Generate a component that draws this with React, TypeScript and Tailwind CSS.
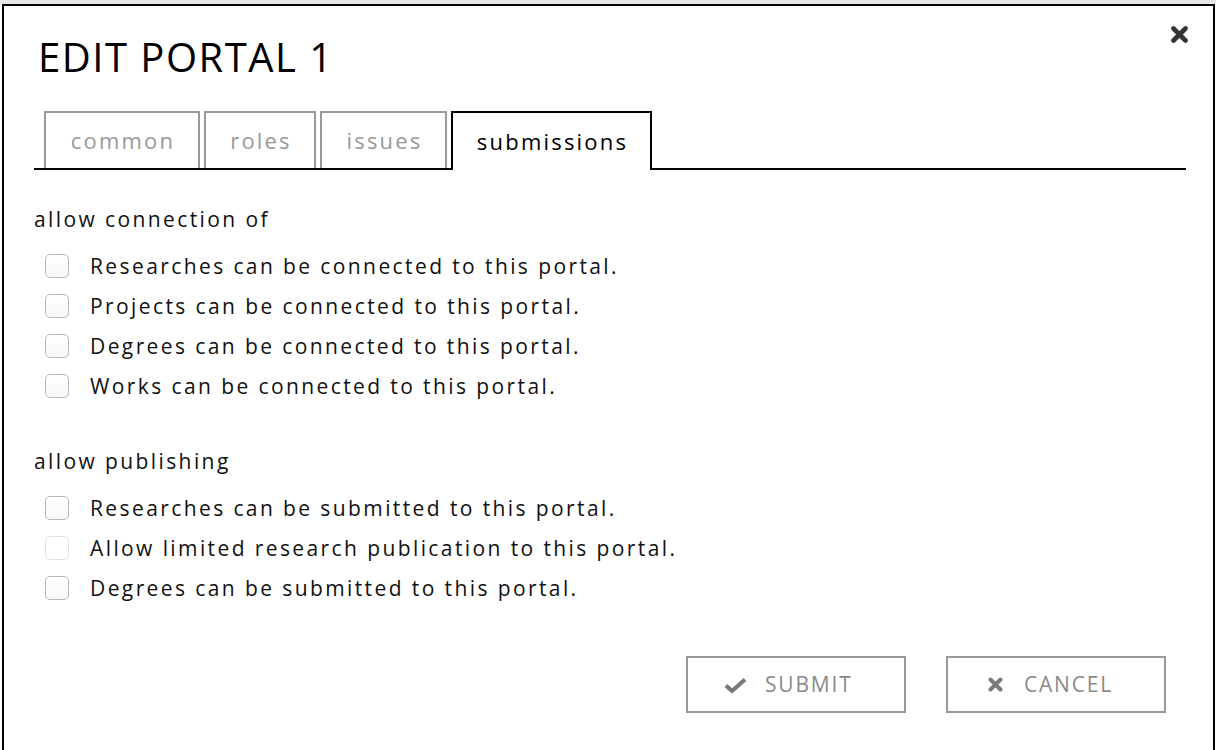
import { useState } from 'react'

const FONT = { fontFamily: '"Open Sans", "Liberation Sans", sans-serif' }

const connections = [
  'Researches can be connected to this portal.',
  'Projects can be connected to this portal.',
  'Degrees can be connected to this portal.',
  'Works can be connected to this portal.',
]

const publishing = [
  { label: 'Researches can be submitted to this portal.', disabled: false },
  { label: 'Allow limited research publication to this portal.', disabled: true },
  { label: 'Degrees can be submitted to this portal.', disabled: false },
]

const tabs = [
  { name: 'common', w: 'w-[156px]' },
  { name: 'roles', w: 'w-[112px]' },
  { name: 'issues', w: 'w-[127px]' },
  { name: 'submissions', w: 'w-[201px]' },
]

export default function App() {
  const [active, setActive] = useState('submissions')
  const [checked, setChecked] = useState<Record<string, boolean>>({})

  return (
    <div className="h-[750px] overflow-hidden flex flex-col bg-white text-[#111]" style={FONT}>
      <div className="h-[4px] bg-[#e6e6e6]" />
      <div className="flex-1 ml-[2px] w-[1213px] border-2 border-b-0 border-black relative pl-[30px] pr-[27px] pt-[27px]">
        {/* close */}
        <button className="absolute top-[20px] right-[25px] w-[17px] h-[17px]" aria-label="Close">
          <svg viewBox="0 0 17 17" width="17" height="17">
            <path d="M2.5 2.5 L14.5 14.5 M14.5 2.5 L2.5 14.5" stroke="#333" strokeWidth="4.6" strokeLinecap="round" />
          </svg>
        </button>

        <h1 className="ml-[4px] text-[40px] leading-[48px] tracking-[1.5px] font-normal text-black">EDIT PORTAL 1</h1>

        {/* tabs */}
        <div className="mt-[30px] flex items-end gap-[4px] pl-[10px] border-b-2 border-black">
          {tabs.map(t =>
            t.name === active ? (
              <button
                key={t.name}
                className={`${t.w} h-[59px] -mb-[2px] pl-[2px] border-2 border-b-0 border-black bg-white text-[22px] tracking-[2.2px] text-black`}
              >
                {t.name}
              </button>
            ) : (
              <button
                key={t.name}
                onClick={() => setActive(t.name)}
                className={`${t.w} h-[57px] pl-[2px] border-2 border-b-0 border-[#9a9a9a] text-[22px] tracking-[2.2px] text-[#999]`}
              >
                {t.name}
              </button>
            )
          )}
        </div>

        <p className="mt-[35px] text-[21px] leading-[28px] tracking-[2.4px]">allow connection of</p>
        <div className="mt-[13px]">
          {connections.map(c => (
            <CheckRow key={c} label={c} checked={!!checked[c]} onChange={v => setChecked({ ...checked, [c]: v })} />
          ))}
        </div>

        <p className="mt-[41px] text-[21px] leading-[28px] tracking-[2.4px]">allow publishing</p>
        <div className="mt-[13px]">
          {publishing.map(p => (
            <CheckRow
              key={p.label}
              label={p.label}
              disabled={p.disabled}
              checked={!!checked[p.label]}
              onChange={v => setChecked({ ...checked, [p.label]: v })}
            />
          ))}
        </div>

        {/* actions */}
        <div className="mt-[48px] mr-[20px] flex justify-end gap-[40px]">
          <button className="w-[220px] h-[57px] pl-[36px] border-2 border-[#999] flex items-center gap-[18px] text-[#8a8a8a] text-[21px] tracking-[1.8px]">
            <svg viewBox="0 0 23 16" width="23" height="16">
              <path d="M2 8.5 L8 14 L21 2.5" fill="none" stroke="#7a7a7a" strokeWidth="4.2" strokeLinejoin="round" />
            </svg>
            SUBMIT
          </button>
          <button className="w-[220px] h-[57px] pl-[40px] border-2 border-[#999] flex items-center gap-[21px] text-[#8a8a8a] text-[21px] tracking-[1.8px]">
            <svg viewBox="0 0 15 15" width="15" height="15">
              <path d="M2.5 2.5 L12.5 12.5 M12.5 2.5 L2.5 12.5" stroke="#7a7a7a" strokeWidth="4" strokeLinecap="round" />
            </svg>
            CANCEL
          </button>
        </div>
      </div>
    </div>
  )
}

function CheckRow({
  label, checked, onChange, disabled,
}: {
  label: string
  checked: boolean
  onChange: (v: boolean) => void
  disabled?: boolean
}) {
  return (
    <label className="h-[40px] flex items-center">
      <span
        onClick={() => !disabled && onChange(!checked)}
        className={`ml-[11px] w-[24px] h-[24px] rounded-[5px] border flex items-center justify-center ${
          disabled ? 'border-[#e0e0e0] bg-white' : 'border-[#b8b8b8] bg-gradient-to-b from-white to-[#f7f7f7]'
        }`}
      >
        {checked && (
          <svg viewBox="0 0 16 16" width="14" height="14">
            <path d="M3 8.5 L6.5 12 L13 4" fill="none" stroke="#333" strokeWidth="2.2" />
          </svg>
        )}
      </span>
      <span className="ml-[21px] text-[21px] leading-[28px] tracking-[2.4px]">{label}</span>
    </label>
  )
}
